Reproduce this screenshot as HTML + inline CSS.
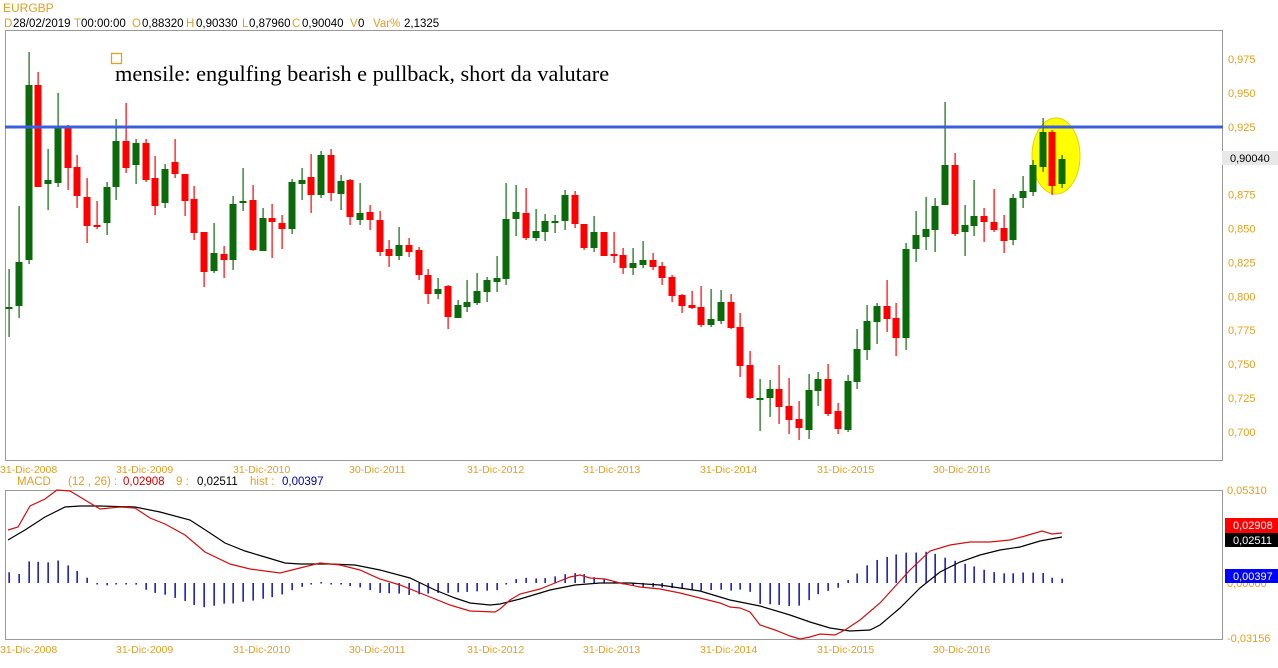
<!DOCTYPE html>
<html><head><meta charset="utf-8"><style>
html,body{margin:0;padding:0;background:#fff;width:1278px;height:668px;overflow:hidden}
svg{display:block;font-family:"Liberation Sans",Arial,sans-serif}
</style></head><body>
<svg id="s" width="1278" height="668" xmlns="http://www.w3.org/2000/svg">
<rect width="1278" height="668" fill="#fff"/>
<text x="3" y="12" font-size="12" fill="#e0a020">EURGBP</text>
<g font-size="11.5" fill="#000">
<text x="4" y="27" fill="#e0a020">D</text><text x="13" y="27">28/02/2019</text>
<text x="74" y="27" fill="#e0a020">T</text><text x="81" y="27">00:00:00</text>
<text x="132" y="27" fill="#e0a020">O</text><text x="142" y="27">0,88320</text>
<text x="186" y="27" fill="#e0a020">H</text><text x="196" y="27">0,90330</text>
<text x="242" y="27" fill="#e0a020">L</text><text x="249" y="27">0,87960</text>
<text x="292" y="27" fill="#e0a020">C</text><text x="302" y="27">0,90040</text>
<text x="350" y="27" fill="#e0a020">V</text><text x="358" y="27">0</text>
<text x="373" y="27" fill="#e0a020">Var%</text><text x="404" y="27">2,1325</text>
</g>
<rect x="5.5" y="30.5" width="1217" height="430" fill="none" stroke="#999"/>
<rect x="5.5" y="490.5" width="1217" height="149" fill="none" stroke="#999"/>
<ellipse cx="1056" cy="156" rx="24" ry="38" fill="#ffff00" stroke="#e6d200"/>
<rect x="111.5" y="53.5" width="10" height="10" fill="none" stroke="#e0a020" stroke-width="1.3"/>
<text x="115" y="81" font-family="'Liberation Serif',serif" font-size="22.3" fill="#000">mensile: engulfing bearish e pullback, short da valutare</text>
<g id="c"></g>
<rect x="5" y="125.5" width="1218" height="3" fill="#3b5fdb"/>
<g id="m"></g>
<g font-size="11" fill="#e0a020" id="ax"></g>
<rect x="1222" y="151" width="56" height="14" fill="#e8e8e8"/>
<text x="1230" y="162" font-size="11" fill="#000">0,90040</text>
<g font-size="11.5">
<text x="17" y="485" fill="#e0a020">MACD</text>
<text x="68" y="485" fill="#e0a020">(12 , 26) :</text>
<text x="123" y="485" fill="#d00000">0,02908</text>
<text x="176" y="485" fill="#e0a020">9 :</text>
<text x="197" y="485" fill="#000">0,02511</text>
<text x="250" y="485" fill="#e0a020">hist :</text>
<text x="282" y="485" fill="#0000b0">0,00397</text>
</g>
<text x="1227" y="494" font-size="11" fill="#e0a020">0,05310</text>
<text x="1227" y="587" font-size="11" fill="#e0a020">0,00000</text>
<text x="1227" y="642" font-size="11" fill="#e0a020">-0,03156</text>
<rect x="1225" y="518" width="53" height="15" fill="#ff0000"/>
<text x="1233" y="529" font-size="11" fill="#fff">0,02908</text>
<rect x="1225" y="533" width="53" height="14" fill="#000"/>
<text x="1233" y="544" font-size="11" fill="#fff">0,02511</text>
<rect x="1225" y="569" width="53" height="14" fill="#0000ff"/>
<text x="1233" y="580" font-size="11" fill="#fff">0,00397</text>
</svg>
<script>
var NS="http://www.w3.org/2000/svg";
function el(p,t,a){var e=document.createElementNS(NS,t);for(var k in a)e.setAttribute(k,a[k]);p.appendChild(e);return e;}
var C=[[307,307,269,337],[306,262,206,318],[260,85,52,264],[85,187,72,187],[184,180,149,210],[183,128,93,187],[128,168,125,190],[167,196,155,208],[197,226,178,243],[225,226,201,229],[223,187,182,235],[187,141,119,200],[141,168,103,173],[165,143,139,184],[143,180,139,182],[178,206,156,215],[203,169,164,208],[162,174,139,178],[174,201,174,216],[199,233,186,240],[232,272,232,287],[271,253,223,273],[254,260,246,278],[260,204,196,270],[203,201,168,211],[200,250,185,251],[251,218,208,251],[218,222,204,258],[223,229,215,249],[229,182,179,234],
[184,180,168,200],[177,195,154,213],[195,155,151,198],[155,193,149,201],[194,181,175,210],[180,217,179,225],[220,213,183,225],[212,220,205,230],[220,252,211,256],[249,256,240,267],[256,245,227,260],[245,252,238,257],[250,275,247,280],[275,294,269,304],[294,289,278,299],[286,317,285,329],[318,305,300,318],[307,302,280,312],[303,291,273,305],[292,280,277,302],[282,278,256,292],[279,219,183,285],[219,212,185,236],[213,238,188,240],[238,231,209,241],[232,221,214,241],[222,221,215,233],[221,195,190,230],[195,224,191,228],[224,248,224,250],[248,232,216,252],[232,256,232,256],[254,255,232,263],[255,268,248,274],[268,263,248,275],[265,260,241,268],[260,267,253,270],[266,278,262,285],[277,296,275,302],
[295,306,294,313],[305,308,291,309],[307,325,286,327],[325,319,289,327],[321,302,290,324],[302,328,294,329],[327,366,313,377],[365,398,351,399],[398,398,379,431],[398,389,380,417],[389,407,365,424],[406,420,378,434],[419,428,401,440],[430,390,374,439],[391,379,372,406],[379,414,364,416],[411,429,403,434],[430,381,375,432],[382,349,329,389],[350,321,305,360],[322,306,303,344],[306,319,280,332],[318,338,303,356],
[338,249,243,350],[249,235,211,262],[237,229,197,250],[230,206,198,252],[205,165,102,205],[165,234,153,236],[232,225,205,256],[226,216,180,236],[216,222,208,242],[222,230,189,232],[228,241,215,253],[240,198,194,245],[198,191,176,208],[192,165,160,196],[167,132,118,172],[132,186,130,195],[184,159,155,188]];
var g=document.getElementById("c");
C.forEach(function(d,i){var x=Math.round(9+9.75*i);var o=d[0],c=d[1];var col=c<o?"#0b6b0b":(c>o?"#ff0000":"#0b6b0b");
el(g,"rect",{x:x-0.5,y:d[2],width:1.2,height:d[3]-d[2],fill:col});
var t=Math.min(o,c),h=Math.max(Math.abs(o-c),2);el(g,"rect",{x:x-3.5,y:t,width:7,height:h,fill:col});});
var R=[[8,530],[18,527],[30,506],[45,499],[57,490],[70,491],[80,497],[100,509],[120,507],[135,508],[150,518],[165,524],[185,535],[205,552],[230,564],[250,569],[280,573],[300,568],[320,563],[340,565],[360,570],[380,579],[400,585],[430,597],[450,605],[470,611],[495,612],[500,609],[510,600],[520,594],[540,589],[555,583],[570,577],[580,575],[590,578],[605,579],[620,583],[640,587],[660,589],[680,593],[700,598],[720,603],[730,607],[740,608],[750,612],[760,625],[775,630],[790,636],[800,639],[810,637],[820,634],[835,635],[845,630],[860,620],[880,603],[910,570],[930,551],[950,545],[970,542],[990,542],[1010,540],[1025,536],[1042,531],[1052,534],[1062,533]];
var B=[[8,540],[25,530],[45,517],[65,507],[80,506],[100,506],[135,507],[160,512],[190,520],[210,533],[225,543],[245,551],[265,557],[285,563],[300,564],[330,564],[355,565],[380,570],[410,578],[435,590],[455,598],[470,603],[490,605],[500,604],[520,599],[550,590],[575,585],[600,583],[630,583],[660,585],[700,591],[730,600],[760,606],[790,615],[810,622],[830,628],[850,631],[870,630],[880,625],[900,608],[920,588],[940,572],[960,562],[980,555],[1000,550],[1020,547],[1040,541],[1062,537]];
function interp(P,x){for(var i=1;i<P.length;i++)if(x<=P[i][0]){var a=P[i-1],b=P[i];return a[1]+(b[1]-a[1])*(x-a[0])/(b[0]-a[0]);}return P[P.length-1][1];}
var m=document.getElementById("m");
for(var i=0;i<109;i++){var x=Math.round(9+9.75*i);var v=(interp(B,x)-interp(R,x))*1.1;var y1=583-v;el(m,"rect",{x:x-0.6,y:Math.min(583,y1),width:1.5,height:Math.max(Math.abs(v),1.5),fill:"#1010b0"});}
function pl(P,c){el(m,"polyline",{points:P.map(function(p){return p.join(",")}).join(" "),fill:"none",stroke:c,"stroke-width":1.2});}
pl(B,"#000");pl(R,"#d01010");
var ax=document.getElementById("ax");
var vals=["0,975","0,950","0,925","0,900","0,875","0,850","0,825","0,800","0,775","0,750","0,725","0,700"];
vals.forEach(function(v,i){var y=59+i*33.9;var t=el(ax,"text",{x:1228,y:y+4});t.textContent=v;});
var D=[["31-Dic-2008",0],["31-Dic-2009",116],["31-Dic-2010",233],["30-Dic-2011",349],["31-Dic-2012",467],["31-Dic-2013",583],["31-Dic-2014",700],["31-Dic-2015",817],["30-Dic-2016",933]];
D.forEach(function(d){[473,653].forEach(function(y){var t=el(ax,"text",{x:d[1],y:y,"font-size":"10.5"});t.textContent=d[0];});});
</script>
</body></html>
